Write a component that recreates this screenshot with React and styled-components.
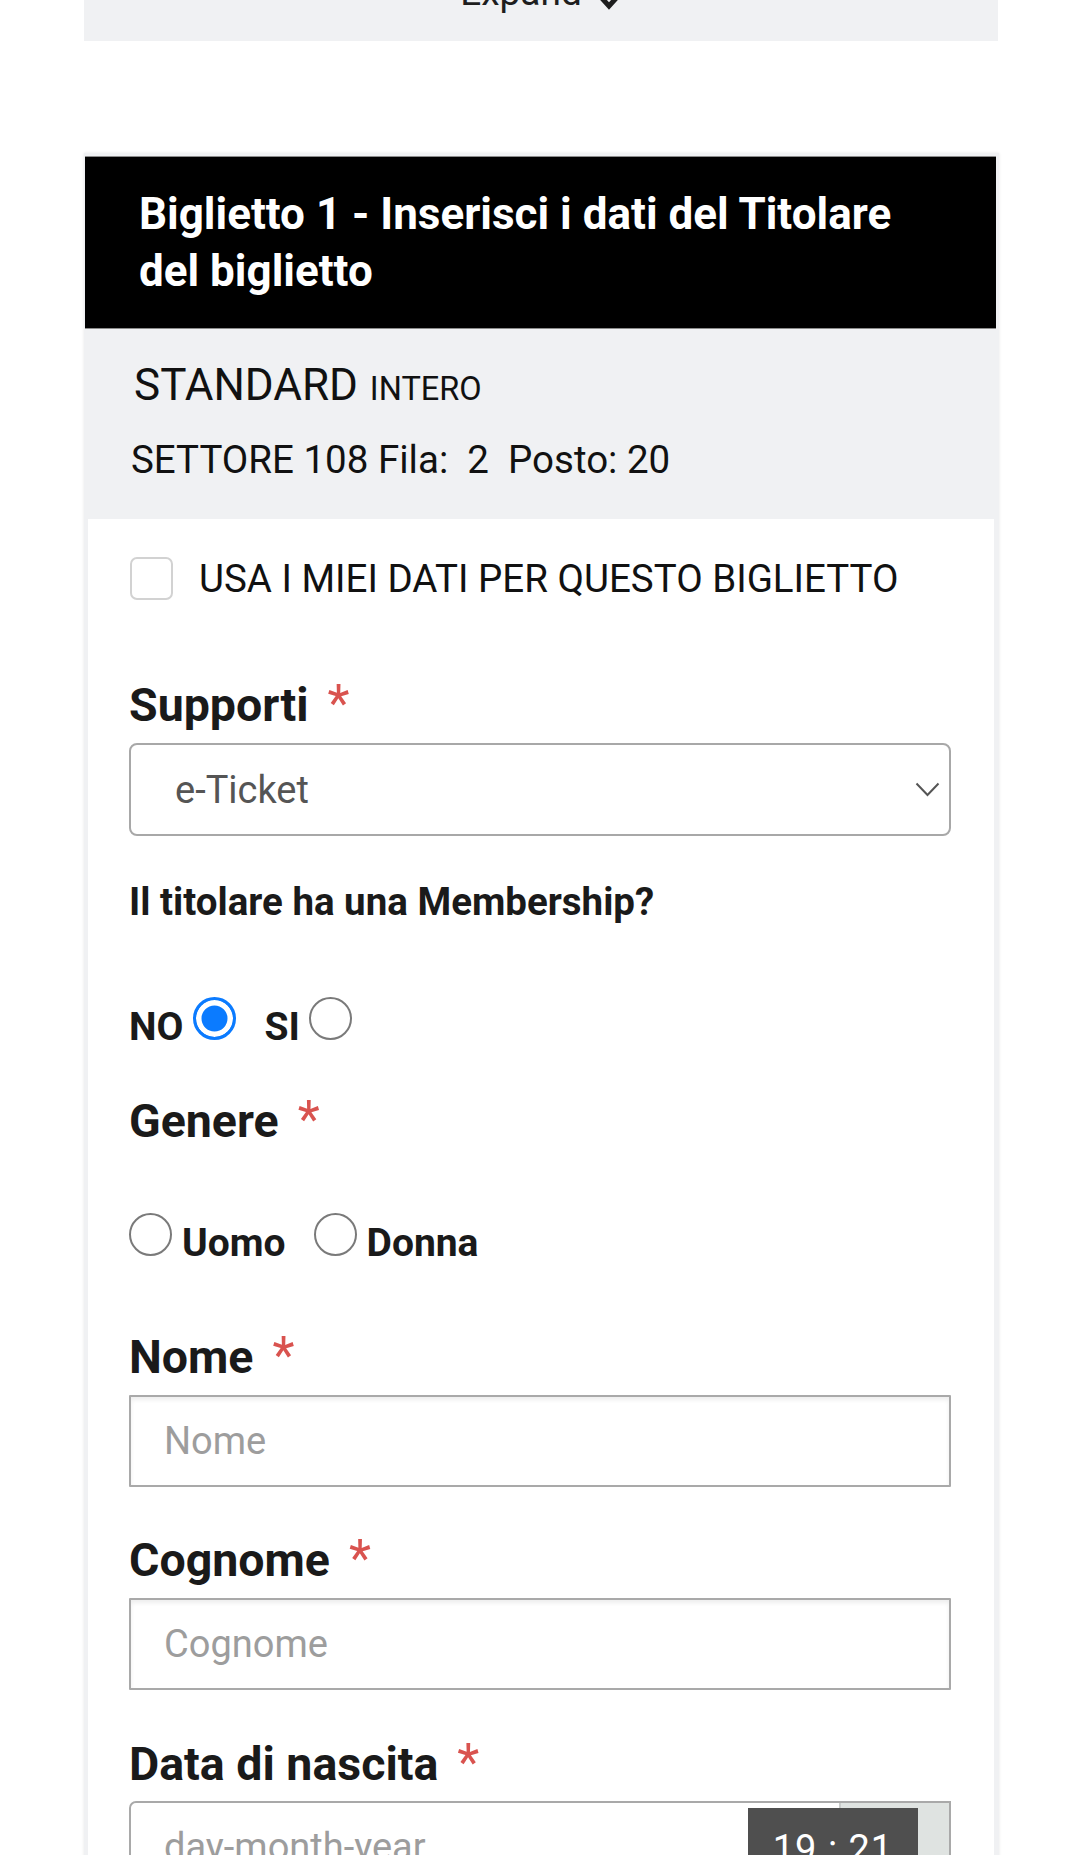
import React from 'react';
import styled, { createGlobalStyle } from 'styled-components';

const GlobalStyle = createGlobalStyle`
  html, body { margin: 0; padding: 0; background: #ffffff; }
  body {
    font-family: Roboto, "Liberation Sans", Arial, sans-serif;
    color: #111;
    -webkit-font-smoothing: antialiased;
  }
  * { box-sizing: border-box; }
`;

const Page = styled.div`
  width: 1080px;
  padding-left: 84px;
  padding-bottom: 80px;
`;

const ExpandBar = styled.div`
  width: 914px;
  height: 41px;
  background: #f0f1f3;
  overflow: hidden;
  display: flex;
  justify-content: center;
  align-items: flex-start;
`;

const ExpandInner = styled.div`
  margin-top: -26px;
  display: flex;
  align-items: flex-end;
  gap: 14px;
  font-size: 37px;
  line-height: 37px;
  color: #1e1e1e;
`;

const Card = styled.section`
  margin-top: 112px;
  width: 915px;
  background: #f0f1f3;
  padding-top: 3px;
  box-shadow: 0 0 3px rgba(0, 0, 0, 0.1);
`;

const CardHeader = styled.h2`
  margin: 0 3px 0 1px;
  background: #000;
  border-top: 1px solid #8c8c8c;
  border-bottom: 1px solid #8c8c8c;
  padding: 29px 55px 28px 54px;
  color: #fff;
  font-size: 44px;
  font-weight: 700;
  line-height: 57px;
`;

const TicketInfo = styled.div`
  padding: 31px 48px 37px 50px;
  color: #111;
`;

const TicketType = styled.div`
  font-size: 44px;
  line-height: 50px;
`;

const TicketSub = styled.span`
  font-size: 32.5px;
  line-height: 1;
  margin-left: 1px;
`;

const SeatLine = styled.div`
  margin-top: 28px;
  margin-left: -3px;
  font-size: 38.5px;
  line-height: 44px;
`;

const Form = styled.div`
  margin: 0 5px 0 4px;
  background: #fff;
  padding: 38px 43px 60px 41px;
`;

const CheckRow = styled.label`
  display: flex;
  align-items: center;
  gap: 26px;
  height: 43px;
  font-size: 38.5px;
  line-height: 43px;
  color: #111;
`;

const CheckBox = styled.span`
  width: 43px;
  height: 43px;
  margin-left: 1px;
  border: 2px solid #d2d2d2;
  border-radius: 7px;
  background: #fff;
  flex: none;
`;

const FieldLabel = styled.div`
  margin: ${(p) => p.$top}px 0 ${(p) => (p.$bottom ?? 11)}px;
  font-size: 46.5px;
  font-weight: 700;
  line-height: 54px;
  color: #1a1a1a;
`;

const Required = styled.span`
  margin-left: 19px;
  color: #d9534f;
  font-weight: 400;
  font-size: 51px;
  line-height: 1;
`;

const SelectBox = styled.div`
  width: 822px;
  height: 93px;
  border: 2px solid #a8a8a8;
  border-radius: 8px;
  padding: 0 9px 0 44px;
  display: flex;
  align-items: center;
  justify-content: space-between;
  font-size: 38px;
  color: #555;
`;

const Question = styled.div`
  margin-top: 43px;
  font-size: 38.5px;
  font-weight: 700;
  line-height: 45px;
  color: #1a1a1a;
`;

const RadioRow = styled.div`
  margin-top: ${(p) => p.$top}px;
  font-size: 39px;
  font-weight: 700;
  line-height: 46px;
  color: #1a1a1a;
  white-space: nowrap;
`;

const RadioOption = styled.label`
  display: inline;
  margin-right: ${(p) => p.$gap || 0}px;
`;

const Radio = styled.span`
  display: inline-block;
  width: 43px;
  height: 43px;
  border-radius: 50%;
  margin: 0 ${(p) => p.$mr || 0}px 0 ${(p) => p.$ml || 0}px;
  border: ${(p) => (p.$checked ? '3px solid #0b7bff' : '2.5px solid #7a7a7a')};
  background: ${(p) => (p.$checked ? '#0b7bff' : '#fff')};
  box-shadow: ${(p) => (p.$checked ? 'inset 0 0 0 5.5px #fff' : 'none')};
`;

const TextInput = styled.input`
  display: block;
  width: 822px;
  height: 92px;
  margin: 0;
  border: 2px solid #a9a9a9;
  border-radius: 1px;
  padding: 0 0 0 33px;
  font-family: Roboto, "Liberation Sans", Arial, sans-serif;
  font-size: 38px;
  color: #333;
  background: #fff;
  box-shadow: inset 0 3px 4px rgba(0, 0, 0, 0.07);
  outline: none;
  &::placeholder {
    color: #9d9d9d;
  }
`;

const DateBox = styled.div`
  position: relative;
  width: 822px;
  height: 92px;
  border: 2px solid #a9a9a9;
  border-radius: 7px 0 0 0;
  display: flex;
  align-items: stretch;
  background: #fff;
`;

const DatePlaceholder = styled.div`
  flex: 1;
  display: flex;
  align-items: center;
  padding-left: 33px;
  font-size: 38px;
  color: #9d9d9d;
`;

const CalendarSide = styled.div`
  width: 110px;
  background: #dfe3e1;
  border-left: 2px solid #c9cccb;
`;

const TimeBadge = styled.div`
  position: absolute;
  left: 617px;
  top: 5px;
  width: 170px;
  height: 90px;
  background: #4f4f4f;
  color: #fff;
  font-size: 38px;
  line-height: 44px;
  padding-top: 19px;
  text-align: center;
  letter-spacing: 1px;
`;

const ChevronDownBold = () => (
  <svg width="26" height="18" viewBox="0 0 26 18" aria-hidden="true">
    <polyline points="3,2 13,13 23,2" fill="none" stroke="#1e1e1e" strokeWidth="5" strokeLinejoin="miter" />
  </svg>
);

const ChevronThin = () => (
  <svg width="25" height="15" viewBox="0 0 25 15" aria-hidden="true">
    <polyline points="1.5,1.5 12.5,13 23.5,1.5" fill="none" stroke="#555" strokeWidth="2" />
  </svg>
);

export default function App() {
  return (
    <>
      <GlobalStyle />
      <Page>
        <ExpandBar>
          <ExpandInner>
            <span>Expand</span>
            <ChevronDownBold />
          </ExpandInner>
        </ExpandBar>

        <Card>
          <CardHeader>Biglietto 1 - Inserisci i dati del Titolare del biglietto</CardHeader>

          <TicketInfo>
            <TicketType>
              STANDARD <TicketSub>INTERO</TicketSub>
            </TicketType>
            <SeatLine>{'SETTORE 108 Fila:\u00a0 2\u00a0 Posto: 20'}</SeatLine>
          </TicketInfo>

          <Form>
            <CheckRow>
              <CheckBox />
              <span>USA I MIEI DATI PER QUESTO BIGLIETTO</span>
            </CheckRow>

            <FieldLabel $top={78}>
              Supporti<Required>*</Required>
            </FieldLabel>
            <SelectBox>
              <span>e-Ticket</span>
              <ChevronThin />
            </SelectBox>

            <Question>Il titolare ha una Membership?</Question>
            <RadioRow $top={73}>
              <RadioOption $gap={28}>
                NO<Radio $checked $ml={10} />
              </RadioOption>
              <RadioOption>
                SI<Radio $ml={9} />
              </RadioOption>
            </RadioRow>

            <FieldLabel $top={44} $bottom={0}>
              Genere<Required>*</Required>
            </FieldLabel>
            <RadioRow $top={65}>
              <RadioOption $gap={28}>
                <Radio $mr={10} />Uomo
              </RadioOption>
              <RadioOption>
                <Radio $mr={10} />Donna
              </RadioOption>
            </RadioRow>

            <FieldLabel $top={64}>
              Nome<Required>*</Required>
            </FieldLabel>
            <TextInput placeholder="Nome" />

            <FieldLabel $top={46}>
              Cognome<Required>*</Required>
            </FieldLabel>
            <TextInput placeholder="Cognome" />

            <FieldLabel $top={47} $bottom={10}>
              Data di nascita<Required>*</Required>
            </FieldLabel>
            <DateBox>
              <DatePlaceholder>day-month-year</DatePlaceholder>
              <CalendarSide />
              <TimeBadge>19 : 21</TimeBadge>
            </DateBox>
          </Form>
        </Card>
      </Page>
    </>
  );
}
